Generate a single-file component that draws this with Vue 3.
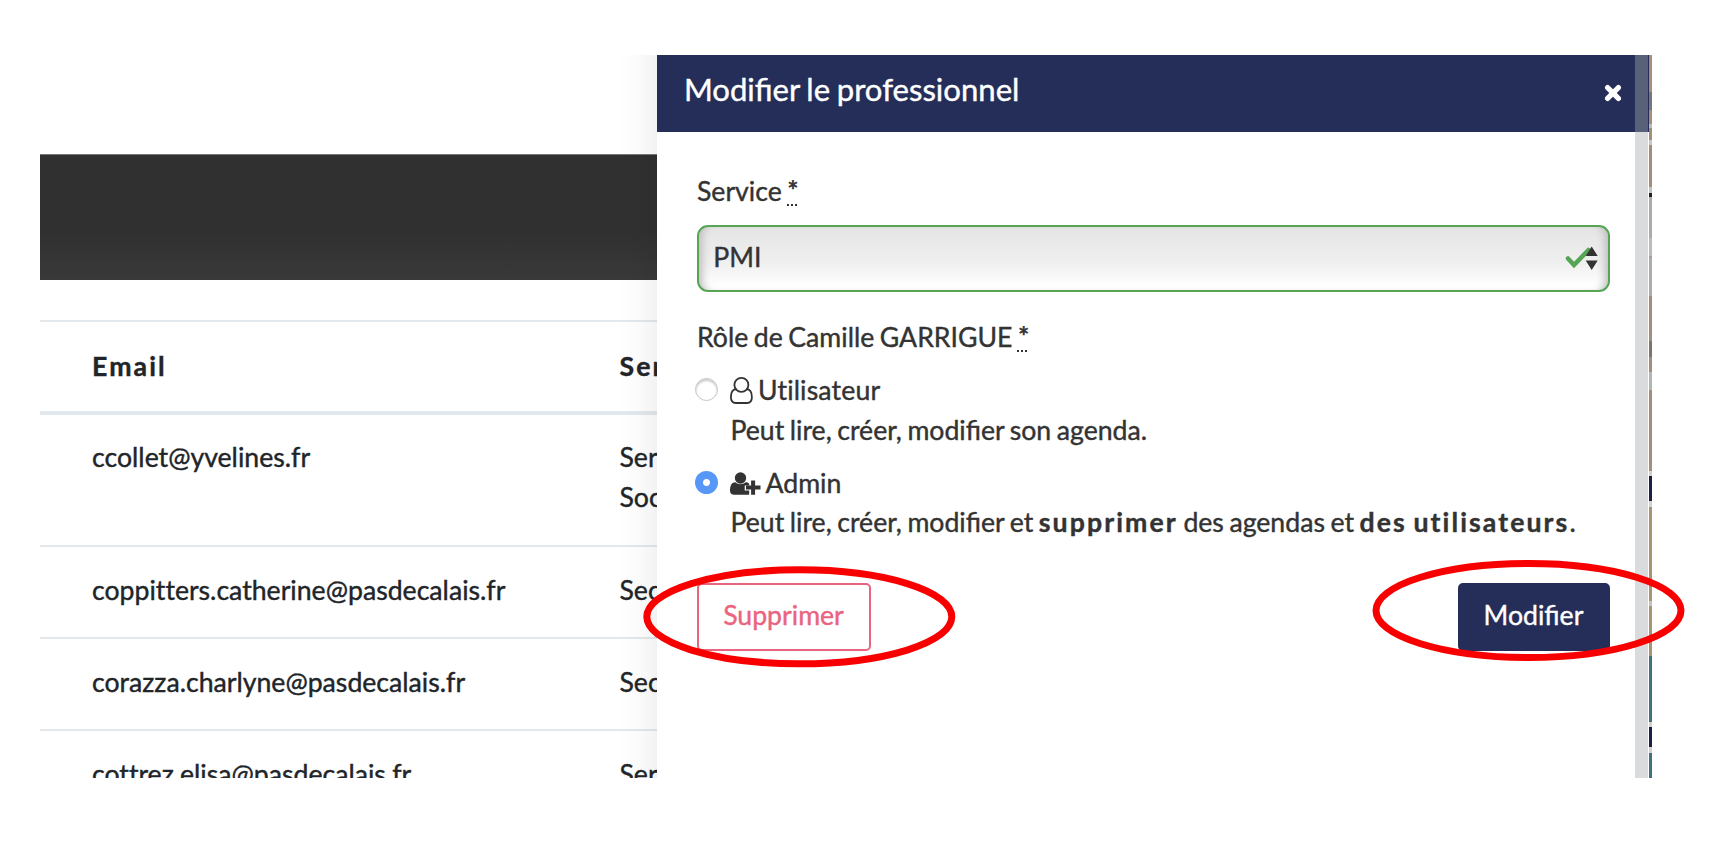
<script setup>
const rows = [
  { email: 'ccollet@yvelines.fr', service: ['Service', 'Social'] },
  { email: 'coppitters.catherine@pasdecalais.fr', service: ['Secrétariat'] },
  { email: 'corazza.charlyne@pasdecalais.fr', service: ['Secrétariat'] },
  { email: 'cottrez.elisa@pasdecalais.fr', service: ['Service'] },
]
// Sliver of the desktop visible past the window edge: [colour, height]
const strip = [
  ['#a58e79', 37], ['#77777b', 18], ['#a58e79', 14], ['#b9b9b6', 4], ['#a58e79', 12], ['#c5c8c7', 5],
  ['#a58e79', 42], ['#bfc3c2', 6], ['#1e2120', 4], ['#a9acaa', 38], ['#b7a79e', 3], ['#b9bcbb', 18], ['#b39c91', 2],
  ['#aaadac', 38], ['#a58e79', 45], ['#7c746d', 16], ['#a58e79', 15], ['#b3b5b2', 18], ['#a58e79', 81], ['#d2d2ca', 5],
  ['#1b2145', 25], ['#d2d2ca', 6], ['#a89470', 94], ['#c4c2b8', 5], ['#a89470', 50], ['#41717f', 66],
  ['#d2d2ca', 5], ['#1b2145', 20], ['#d2d2ca', 6], ['#41717f', 29],
]
</script>

<template>
  <main class="page">
    <div class="shot">
      <section class="list">
        <div class="banner"></div>
        <div class="row head"><span class="email">Email</span><span>Service</span></div>
        <div v-for="(r, i) in rows" :key="r.email" class="row" :class="{ first: i === 0 }">
          <span class="email">{{ r.email }}</span>
          <span><span v-for="s in r.service" :key="s" class="line">{{ s }}</span></span>
        </div>
      </section>

      <aside class="panel">
        <header class="bar">
          <h1>Modifier le professionnel</h1>
          <svg class="close" viewBox="0 0 18 18"><path d="M3.6 3.6 14.4 14.4M14.4 3.6 3.6 14.4" /></svg>
        </header>
        <form class="body">
          <label class="label">Service <abbr>*</abbr></label>
          <div class="select">
            <span>PMI</span>
            <svg class="marks" viewBox="0 0 33 24">
              <path class="check" d="M3 12.5 9 19 23.5 4" />
              <path class="arrow" d="M26.7.5 32.7 10H20.7ZM26.7 24 20.7 14.5H32.7Z" />
            </svg>
          </div>
          <div class="label role">Rôle de Camille GARRIGUE <abbr>*</abbr></div>
          <div class="option">
            <i class="radio"></i>
            <div>
              <div class="name">
                <svg class="user" viewBox="0 0 23 27"><path d="M6.6 12.2C3 12.2.9 15.5.9 20.3c0 3.600 2 5.700 4.900 5.700h11.200c2.900 0 4.900-2.100 4.900-5.700 0-4.800-2.100-8.100-5.700-8.100" /><circle cx="11.4" cy="7.900" r="7" /></svg>
                <span class="plain">Utilisateur</span>
              </div>
              <p>Peut lire, créer, modifier son agenda.</p>
            </div>
          </div>
          <div class="option second">
            <i class="radio on"></i>
            <div>
              <div class="name">
                <svg class="plus" viewBox="0 0 31 23"><circle cx="10.500" cy="6" r="5.700" /><path d="M5.200 10.200c3.200 2.600 7.400 2.600 10.600 0 1.600 0 2.700.6 3.400 1.600v1.600h-4.500v5h4.500v4.400H4.200C1.700 22.800 0 21.400 0 18.800c0-4.500 1.300-8.600 5.200-8.600Z" /><path d="M21.100 8.500h4v5h5.400v4h-5.400v5.300h-4v-5.300H16v-4h5.100Z" /></svg>
                <span>Admin</span>
              </div>
              <p>Peut lire, créer, modifier et <b>supprimer</b> des agendas et <b>des utilisateurs</b>.</p>
            </div>
          </div>
          <div class="actions">
            <button type="button" class="btn danger">Supprimer</button>
            <button type="button" class="btn primary">Modifier</button>
          </div>
        </form>
        <div class="scroll"></div>
      </aside>
      <div class="strip"><i v-for="(s, i) in strip" :key="i" :style="{ background: s[0], height: s[1] + 'px' }"></i></div>
    </div>
    <svg class="rings" viewBox="0 0 1714 858">
      <ellipse cx="799.300" cy="616.800" rx="152.500" ry="47" />
      <ellipse cx="1528.500" cy="610.500" rx="152.500" ry="47" />
    </svg>
  </main>
</template>

<style>
body { margin: 0; background: #fff; }
</style>
<style scoped>
.page { position: relative; width: 1714px; height: 858px; overflow: hidden; padding: 55px 0 0 40px; box-sizing: border-box; background: #fff; font-family: Lato, sans-serif; font-size: 26.650px; line-height: 39.750px; color: #212529; -webkit-text-stroke: .4px currentColor; }
.shot { display: flex; width: 1612px; height: 723px; overflow: hidden; }
.list { position: relative; flex: none; width: 617.400px; overflow: hidden; font-variant-ligatures: none; }
.list::after { content: ''; position: absolute; right: 0; top: 0; width: 38px; height: 100%; background: linear-gradient(90deg, rgba(0,0,0,0), rgba(0,0,0,.015) 50%, rgba(0,0,0,.05)); }
.banner { margin-top: 99px; height: 126px; background: linear-gradient(#303030 60%, #383938); box-shadow: inset 0 1px #777; }
.row { display: flex; box-sizing: border-box; height: 92px; padding: 24.500px 0 0 52px; border-top: 2px solid #e3e8ec; white-space: nowrap; }
.email { flex: none; width: 527.500px; }
.head { margin-top: 40px; height: 91px; padding-top: 24.500px; font-weight: 700; letter-spacing: 2.100px; }
.row.first { height: 133.500px; padding-top: 23px; border-top-width: 4px; }
.line { display: block; }
.plain { font-variant-ligatures: none; letter-spacing: .15px; }
.panel { position: relative; flex: none; width: 992.100px; background: #fff; color: #333; word-spacing: -1.300px; }
.bar { height: 77px; background: #252e58; color: #fff; display: flex; justify-content: space-between; padding: 0 45px 0 26.500px; box-sizing: border-box; }
h1 { margin: 12.600px 0 0; font-size: 31.100px; line-height: 42px; font-weight: 400; }
.close { width: 18px; height: 18px; margin: 29px -17.500px 0 0; }
.close path { stroke: #fff; stroke-width: 5.200px; stroke-linecap: round; }
.body { padding: 40px 38px 0 39.600px; }
.label { display: block; height: 40px; }
abbr { border-bottom: 0; text-decoration: underline dotted 1.500px; text-underline-offset: 3px; -webkit-text-stroke-width: .7px; }
.select { display: flex; justify-content: space-between; box-sizing: border-box; width: 913px; height: 67px; margin-top: 13px; padding: 11px 10px 0 14.300px; border: 2px solid #55a555; border-radius: 11px; background: linear-gradient(#e5e5e5, #efefef 55%, #fff 95%); box-shadow: inset 9px 0 8px -6px #bbb, inset -9px 0 8px -6px #bbb; }
.marks { width: 33px; height: 24px; margin-top: 8px; }
.check { fill: none; stroke: #55a555; stroke-width: 4.500px; stroke-linecap: round; }
.arrow { fill: #333; }
.role { margin-top: 26px; }
.option { display: flex; height: 80px; margin: 13px 0 0 -2px; }
.option.second { margin-top: 12.500px; }
.radio { flex: none; width: 23px; height: 23px; margin: 7px 12.500px 0 0; box-sizing: border-box; border-radius: 50%; background: #fff; border: 1px solid #c4c4c4; box-shadow: inset 0 2px 2px #ccc; }
.radio.on { border: 0; background: radial-gradient(circle, #fff 3px, #5797f7 4px); box-shadow: none; }
.name { display: flex; height: 39.750px; }
.user { width: 23px; height: 27px; margin: 6px 4.500px 0 0; fill: none; stroke: #333; stroke-width: 1.800px; }
.plus { width: 31px; height: 23px; margin: 8px 4px 0 0; fill: #333; }
p { margin: 0; white-space: pre; }
b { font-weight: 700; letter-spacing: 2.100px; word-spacing: -2px; }
.actions { display: flex; justify-content: space-between; width: 913px; margin-top: 39.500px; }
.btn { height: 67.500px; box-sizing: border-box; border-radius: 5px; font: inherit; border: 2px solid; padding: 0 1px 1px 0; -webkit-text-stroke: inherit; }
.danger { width: 174px; color: #e9657f; background: #fff; }
.primary { width: 152px; color: #fff; background: #252e58; border-color: #252e58; }
.scroll { position: absolute; right: 1px; top: 0; width: 13.500px; height: 100%; background: rgba(163,167,172,.412); }
.strip { flex: none; width: 2.500px; }
.strip i { display: block; }
.rings { position: absolute; left: 0; top: 0; width: 1714px; height: 858px; fill: none; stroke: #f90000; stroke-width: 7px; }
</style>
